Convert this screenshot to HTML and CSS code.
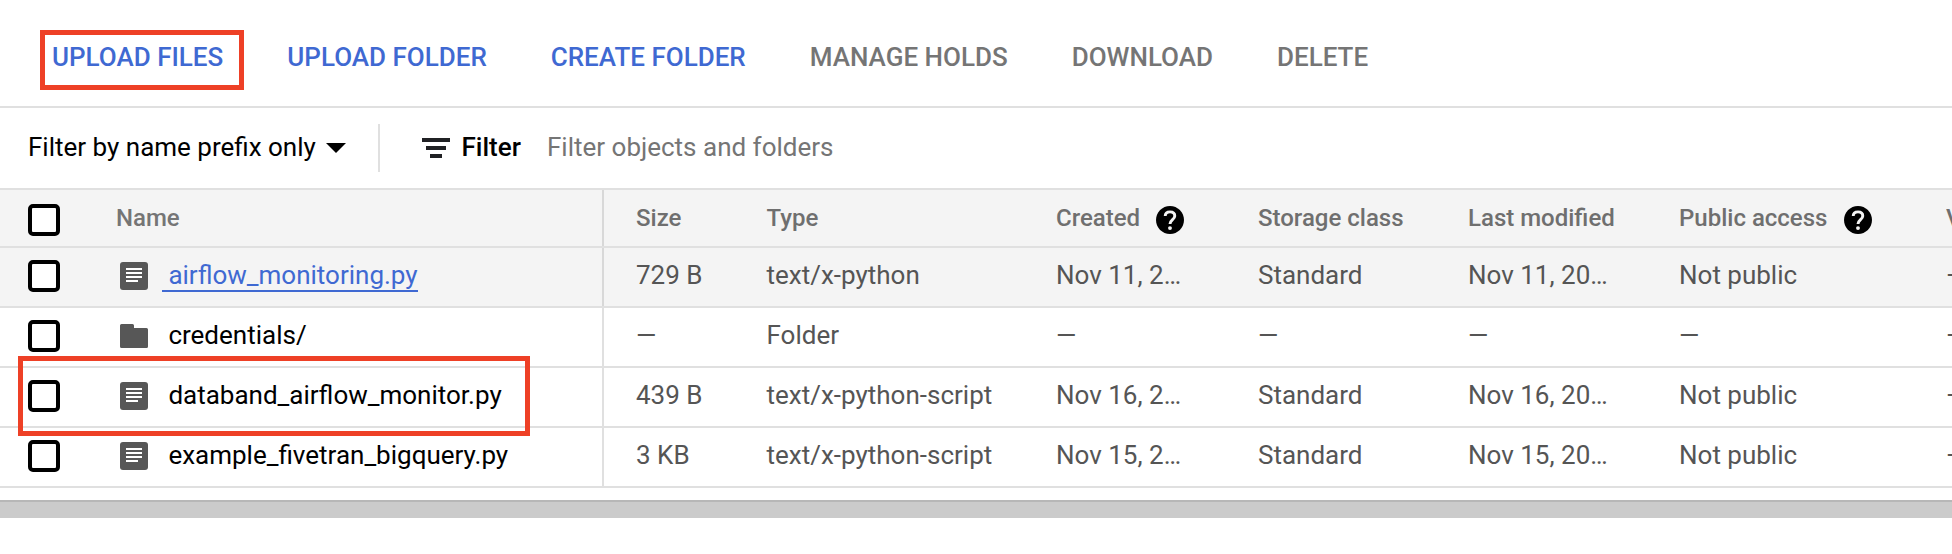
FILE: index.html
```
<!DOCTYPE html>
<html lang="en">
<head>
<meta charset="utf-8">
<title>Bucket objects</title>
<link rel="stylesheet" href="styles.css">
</head>
<body>
<svg class="sprite" aria-hidden="true">
  <symbol id="file" viewBox="0 0 28 28"><path fill="#575757" d="M3 0h22a3 3 0 0 1 3 3v22a3 3 0 0 1-3 3H3a3 3 0 0 1-3-3V3a3 3 0 0 1 3-3z"/><path fill="#fff" d="M6 6h16v2H6zM6 10h16v2H6zM6 14h16v2H6zM6 18h12v2H6z"/></symbol>
  <symbol id="folder" viewBox="0 0 28 28"><path fill="#575757" d="M1.500 2h11A1.500 1.500 0 0 1 14 3.500V6h12.500A1.500 1.500 0 0 1 28 7.500v17a1.500 1.500 0 0 1-1.500 1.500h-25A1.500 1.500 0 0 1 0 24.500v-21A1.500 1.500 0 0 1 1.500 2z"/></symbol>
  <symbol id="help" viewBox="2 2 20 20"><path d="M12 2C6.480 2 2 6.480 2 12s4.480 10 10 10 10-4.480 10-10S17.520 2 12 2z"/><path fill="none" stroke="#f4f4f4" stroke-width="2.1" d="M8.600 9.200C8.600 7.200 10 6.200 12 6.200s3.400 1.100 3.400 2.900c0 2.600-3.400 2.700-3.400 5.800"/><circle cx="12" cy="17.800" r="1.400" fill="#f4f4f4"/></symbol>
</svg>
<nav class="toolbar">
  <button class="action on marked">UPLOAD FILES</button>
  <button class="action on">UPLOAD FOLDER</button>
  <button class="action on">CREATE FOLDER</button>
  <button class="action">MANAGE HOLDS</button>
  <button class="action">DOWNLOAD</button>
  <button class="action">DELETE</button>
</nav>
<div class="filters">
  <div class="scope"><span>Filter by name prefix only</span><svg class="caret" width="20" height="10" viewBox="0 0 20 10"><path d="M0 0h20L10 10z"/></svg></div>
  <div class="divider"></div>
  <svg class="funnel" width="28" height="20" viewBox="0 0 28 20"><path fill="#202124" d="M0 0h28v4H0zM4 8h20v4H4zM8 16h12v4H8z"/></svg>
  <b class="label">Filter</b>
  <span class="hint">Filter objects and folders</span>
</div>
<main class="table">
  <div class="row head">
    <div class="cell name"><i class="check"></i><span>Name</span></div>
    <div class="cell">Size</div><div class="cell">Type</div>
    <div class="cell">Created<svg class="help"><use href="#help"/></svg></div>
    <div class="cell">Storage class</div><div class="cell">Last modified</div>
    <div class="cell">Public access<svg class="help wide"><use href="#help"/></svg></div>
    <div class="cell">V</div>
  </div>
  <div class="row hover">
    <div class="cell name"><i class="check"></i><svg class="icon"><use href="#file"/></svg><a class="link">airflow_monitoring.py</a></div>
    <div class="cell">729 B</div><div class="cell">text/x-python</div><div class="cell">Nov 11, 2…</div><div class="cell">Standard</div><div class="cell">Nov 11, 20…</div><div class="cell">Not public</div><div class="cell">—</div>
  </div>
  <div class="row">
    <div class="cell name"><i class="check"></i><svg class="icon"><use href="#folder"/></svg><a>credentials/</a></div>
    <div class="cell">—</div><div class="cell">Folder</div><div class="cell">—</div><div class="cell">—</div><div class="cell">—</div><div class="cell">—</div><div class="cell">—</div>
  </div>
  <div class="row">
    <div class="cell name"><i class="check"></i><svg class="icon"><use href="#file"/></svg><a>databand_airflow_monitor.py</a><div class="callout"></div></div>
    <div class="cell">439 B</div><div class="cell">text/x-python-script</div><div class="cell">Nov 16, 2…</div><div class="cell">Standard</div><div class="cell">Nov 16, 20…</div><div class="cell">Not public</div><div class="cell">—</div>
  </div>
  <div class="row">
    <div class="cell name"><i class="check"></i><svg class="icon"><use href="#file"/></svg><a>example_fivetran_bigquery.py</a></div>
    <div class="cell">3 KB</div><div class="cell">text/x-python-script</div><div class="cell">Nov 15, 2…</div><div class="cell">Standard</div><div class="cell">Nov 15, 20…</div><div class="cell">Not public</div><div class="cell">—</div>
  </div>
</main>
<div class="scrollbar"></div>
</body>
</html>
```
FILE: styles.css
```
*, *::after { box-sizing: border-box; }
body { margin: 0; width: 1952px; height: 554px; overflow: hidden; background: #fff; color: #000; font: 26px/30px Roboto, sans-serif; }
.sprite { display: none; }
svg { flex: none; }

.toolbar { display: flex; align-items: flex-start; height: 108px; padding: 42px 0 0 52px; gap: 64px; border-bottom: 2px solid #e0e0e0; }
.action { position: relative; padding: 0; border: 0; background: none; color: #757575; font: 500 26px/30px Roboto, sans-serif; white-space: nowrap; }
.action.on { color: #3f69d2; }
.marked::after { content: ""; position: absolute; left: -12px; top: -12px; width: 204px; height: 60px; border: 5px solid #ee4026; }

.filters { display: flex; align-items: center; height: 82px; padding: 0 0 2px 28px; border-bottom: 2px solid #e0e0e0; white-space: nowrap; }
.scope { display: flex; align-items: center; justify-content: space-between; width: 318px; }
.caret, .divider, .funnel { margin-top: 2px; }
.divider { width: 2px; height: 48px; margin-left: 32px; background: #e0e0e0; }
.funnel { margin-left: 42px; }
.label { width: 86px; margin-left: 11.5px; margin-right: -0.5px; font-weight: 500; }
.hint { color: #757575; }

.row { display: grid; grid-template-columns: 604px 162.5px 289.5px 202px 210px 211px 267px 6px; height: 60px; border-bottom: 2px solid #e0e0e0; color: #555; }
.cell { display: flex; align-items: center; padding-bottom: 4px; white-space: nowrap; }
.cell:nth-child(2) { padding-left: 32px; }
.cell:last-child { overflow: hidden; }
.name { position: relative; padding-left: 28px; border-right: 2px solid #e0e0e0; color: #000; }
.check { flex: none; width: 32px; height: 32px; margin: 2px 60px 0 0; border: 4px solid #000; border-radius: 5px; background: #fff; }
.icon { width: 28px; height: 28px; margin: 2px 14px 0 0; }
.name a { padding-left: 6.4px; }
.name .link { align-self: flex-start; height: 34px; margin-top: 10px; padding-top: 2px; border-bottom: 2px solid #3f69d2; color: #3f69d2; }
.hover { background: #f4f4f4; }
.head { height: 58px; background: #f4f4f4; color: #6f6f6f; font-size: 24px; font-weight: 500; }
.head .cell { padding-bottom: 0; }
.head .name { color: #757575; border-color: #d8d8d8; }
.hover .name { border-color: #d8d8d8; }
.head .check { margin: 4px 56px 0 0; }
.help { width: 28px; height: 28px; margin: 4px 0 0 16px; fill: #000; }
.help.wide { margin-left: 16.5px; }
.callout { position: absolute; left: 18px; top: -12px; width: 512px; height: 80px; border: 5px solid #ee4026; }
.scrollbar { height: 18px; margin-top: 12px; border-top: 2px solid #b7b7b7; background: #cbcbcb; }
```
